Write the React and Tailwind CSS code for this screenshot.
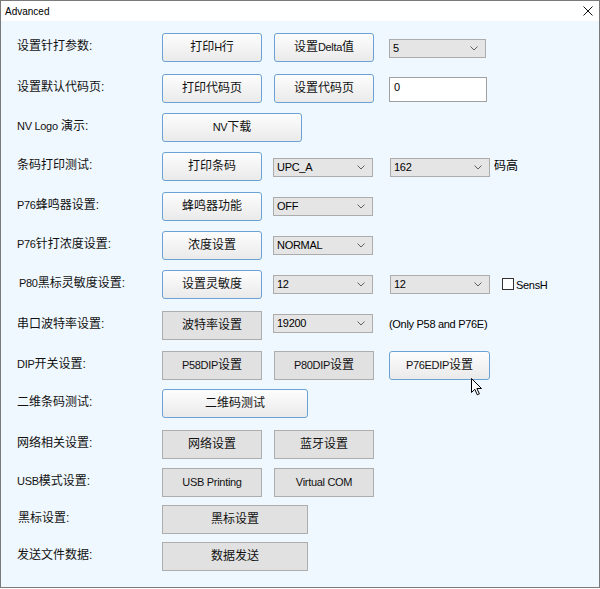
import React from "react";

const FONT = { fontFamily: '"Liberation Sans", "Noto Sans CJK SC", sans-serif' };

// latin text renders narrower in the original dialog font
const L = ({ children }) => <span className="text-[11px] tracking-[-0.3px]">{children}</span>;

const Btn = ({ children, w = "w-[100px]", gray = false, className = "" }) => (
  <div
    className={`${w} h-[29px] flex items-center justify-center text-[12px] text-[#111] shrink-0 ${
      gray
        ? "bg-[#e1e1e1] border border-[#adadad]"
        : "bg-gradient-to-b from-[#fdfdfd] to-[#eaeaea] border border-[#6aa2d6] rounded-[3px]"
    } ${className}`}
  >
    {children}
  </div>
);

const Chevron = () => (
  <svg width="8" height="5" viewBox="0 0 8 5" className="shrink-0">
    <polyline points="0.5,0.5 4,4 7.5,0.5" fill="none" stroke="#606060" strokeWidth="1" />
  </svg>
);

const Select = ({ value, w = "w-[100px]", className = "" }) => (
  <div
    className={`${w} h-[19px] shrink-0 bg-[#e5e5e5] border border-[#acacac] flex items-center justify-between pl-[3px] pr-[7px] text-black ${className}`}
  >
    <L>{value}</L>
    <Chevron />
  </div>
);

const Label = ({ children, className = "" }) => (
  <div className={`w-[161px] shrink-0 pl-[16px] mt-[-2px] text-[12px] text-[#111] ${className}`}>{children}</div>
);

const Row = ({ children, className = "" }) => (
  <div className={`relative flex items-center h-[30px] ${className}`}>{children}</div>
);

export default function App() {
  return (
    <div className="w-[600px] h-[589px] bg-white" style={FONT}>
      <div className="w-[600px] h-[588px] border border-[#7a7a7a] flex flex-col">
        {/* title bar */}
        <div className="h-[20px] bg-white flex items-center justify-between pl-[4px] pr-[6px] shrink-0">
          <span className="text-[10px] text-black">Advanced</span>
          <svg width="10" height="10" viewBox="0 0 10 10">
            <path d="M0.5 0.5 L9.5 9.5 M9.5 0.5 L0.5 9.5" stroke="#111" strokeWidth="1" />
          </svg>
        </div>

        {/* body */}
        <div className="flex-1 bg-[#f0f8ff] flex flex-col pt-[11px]">
          <Row>
            <Label>设置针打参数:</Label>
            <Btn>打印<L>H</L>行</Btn>
            <Btn className="ml-[12px]">设置<L>Delta</L>值</Btn>
            <Select value="5" w="w-[97px]" className="ml-[15px] mt-[3px]" />
          </Row>

          <Row className="mt-[11px]">
            <Label>设置默认代码页:</Label>
            <Btn>打印代码页</Btn>
            <Btn className="ml-[12px]">设置代码页</Btn>
            <div className="ml-[15px] mt-[3px] w-[98px] h-[25px] bg-white border border-[#a0a0a0] text-black text-[11px] leading-[14px] pl-[4px] pt-[2px]">
              <L>0</L>
            </div>
          </Row>

          <Row className="mt-[9px]">
            <Label><L>NV Logo</L> 演示:</Label>
            <Btn w="w-[140px]"><L>NV</L>下载</Btn>
          </Row>

          <Row className="mt-[9px]">
            <Label>条码打印测试:</Label>
            <Btn>打印条码</Btn>
            <Select value="UPC_A" className="ml-[11px] mt-[3px]" />
            <Select value="162" className="ml-[17px] mt-[3px]" />
            <span className="ml-[4px] text-[12px] text-black">码高</span>
          </Row>

          <Row className="mt-[10px]">
            <Label><L>P76</L>蜂鸣器设置:</Label>
            <Btn>蜂鸣器功能</Btn>
            <Select value="OFF" className="ml-[11px]" />
          </Row>

          <Row className="mt-[9px]">
            <Label><L>P76</L>针打浓度设置:</Label>
            <Btn>浓度设置</Btn>
            <Select value="NORMAL" className="ml-[11px]" />
          </Row>

          <Row className="mt-[9px]">
            <Label className="pl-[18px]"><L>P80</L>黑标灵敏度设置:</Label>
            <Btn>设置灵敏度</Btn>
            <Select value="12" className="ml-[11px]" />
            <Select value="12" className="ml-[17px]" />
            <div className="ml-[12px] w-[12px] h-[12px] bg-white border border-[#333]" />
            <span className="ml-[2px] text-black"><L>SensH</L></span>
          </Row>

          <Row className="mt-[11px]">
            <Label>串口波特率设置:</Label>
            <Btn gray>波特率设置</Btn>
            <Select value="19200" className="ml-[11px] mt-[-4px]" />
            <span className="ml-[16px] mt-[-4px] text-black"><L>(Only P58 and P76E)</L></span>
          </Row>

          <Row className="mt-[10px]">
            <Label><L>DIP</L>开关设置:</Label>
            <Btn gray><L>P58DIP</L>设置</Btn>
            <Btn gray className="ml-[12px]"><L>P80DIP</L>设置</Btn>
            <Btn w="w-[101px]" className="ml-[15px]"><L>P76EDIP</L>设置</Btn>
            <svg
              width="12"
              height="18"
              viewBox="0 0 12 18"
              className="absolute left-[470px] top-[28px]"
            >
              <path
                d="M0.5 0.5 L0.5 14.5 L3.8 11.3 L6.3 16.8 L8.4 15.9 L5.9 10.5 L10.5 10.5 Z"
                fill="white"
                stroke="black"
                strokeWidth="1"
                strokeLinejoin="round"
              />
            </svg>
          </Row>

          <Row className="mt-[8px]">
            <Label>二维条码测试:</Label>
            <Btn w="w-[146px]">二维码测试</Btn>
          </Row>

          <Row className="mt-[11px]">
            <Label>网络相关设置:</Label>
            <Btn gray>网络设置</Btn>
            <Btn gray className="ml-[12px]">蓝牙设置</Btn>
          </Row>

          <Row className="mt-[8px]">
            <Label className="pl-[15px]"><L>USB</L>模式设置:</Label>
            <Btn gray><L>USB Printing</L></Btn>
            <Btn gray className="ml-[12px]"><L>Virtual COM</L></Btn>
          </Row>

          <Row className="mt-[7px]">
            <Label className="pl-[17px]">黑标设置:</Label>
            <Btn gray w="w-[146px]">黑标设置</Btn>
          </Row>

          <Row className="mt-[7px]">
            <Label>发送文件数据:</Label>
            <Btn gray w="w-[146px]">数据发送</Btn>
          </Row>
        </div>
      </div>
    </div>
  );
}
